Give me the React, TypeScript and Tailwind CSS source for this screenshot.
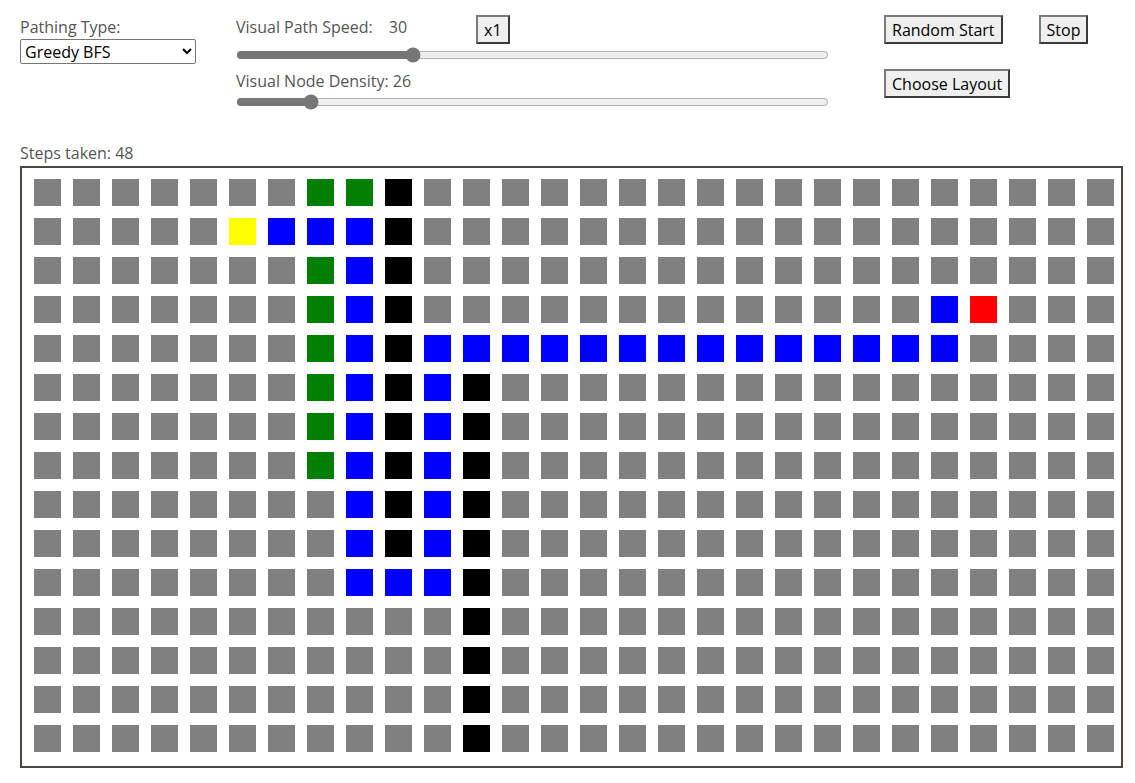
import React, { useState } from "react";

const ROWS = 15;
const COLS = 28;

function cellClass(r: number, c: number) {
  if (r === 1 && c === 5) return "bg-[#ffff00]";
  if (r === 3 && c === 24) return "bg-[#ff0000]";
  if ((c === 7 && [0, 2, 3, 4, 5, 6, 7].includes(r)) || (r === 0 && c === 8)) return "bg-[#008000]";
  if ((c === 9 && r <= 9) || (c === 11 && r >= 5)) return "bg-black";
  if (
    (r === 1 && c >= 6 && c <= 8) ||
    (c === 8 && r >= 2 && r <= 10) ||
    (r === 3 && c === 23) ||
    (r === 4 && c >= 10 && c <= 23) ||
    (c === 10 && r >= 5 && r <= 10) ||
    (r === 10 && c === 9)
  )
    return "bg-[#0000ff]";
  return "bg-[#808080]";
}

const btn =
  "h-[29px] px-[6px] shrink-0 bg-[#efefef] text-black leading-[22px] border-2 border-solid border-t-[#7b7b7b] border-l-[#7b7b7b] border-r-[#3a3a3a] border-b-[#3a3a3a] whitespace-nowrap";

export default function App() {
  const [algo, setAlgo] = useState("greedy");
  const [speed, setSpeed] = useState(30);
  const [density, setDensity] = useState(26);

  return (
    <div className="min-h-screen bg-white pt-[16px] px-[20px] font-['Open_Sans',sans-serif] text-[16px] text-[#555]">
      {/* Controls */}
      <div className="flex items-start h-[126px]">
        <div className="w-[216px] flex flex-col">
          <label className="leading-[22px]">Pathing Type:</label>
          <select
            value={algo}
            onChange={(e) => setAlgo(e.target.value)}
            className="mt-[1px] h-[25px] w-[176px] pl-0 border border-[#767676] rounded-[2px] bg-white text-black text-[16px]"
          >
            <option value="greedy">Greedy BFS</option>
            <option value="astar">A*</option>
            <option value="dijkstra">Dijkstra</option>
          </select>
        </div>

        <div className="w-[593px] flex flex-col">
          <div className="flex items-start h-[22px] leading-[22px]">
            <span>Visual Path Speed:</span>
            <span className="ml-[16px]">{speed}</span>
            <button className={`${btn} -mt-[1px] ml-[69px]`}>x1</button>
          </div>
          <input
            type="range"
            min={1}
            max={100}
            value={speed}
            onChange={(e) => setSpeed(Number(e.target.value))}
            className="block m-0 mt-[9px] w-full h-[16px] accent-[#767676]"
          />
          <div className="mt-[7px] leading-[22px]">Visual Node Density: {density}</div>
          <input
            type="range"
            min={15}
            max={110}
            value={density}
            onChange={(e) => setDensity(Number(e.target.value))}
            className="block m-0 mt-[2px] w-full h-[16px] accent-[#767676]"
          />
        </div>

        <div className="ml-[55px] flex flex-col -mt-[1px]">
          <div className="flex items-start">
            <button className={btn}>Random Start</button>
            <button className={`${btn} ml-[36px]`}>Stop</button>
          </div>
          <div className="mt-[25px]">
            <button className={btn}>Choose Layout</button>
          </div>
        </div>
      </div>

      <div className="leading-[22px]">Steps taken: 48</div>

      {/* Grid */}
      <div className="mt-[2px] w-[1103px] h-[602px] border-2 border-[#4b4641] pt-[11px] pl-[12px]">
        <div className="grid grid-cols-[repeat(28,27px)] auto-rows-[27px] gap-[12px]">
          {Array.from({ length: ROWS * COLS }).map((_, i) => {
            const r = Math.floor(i / COLS);
            const c = i % COLS;
            return <div key={i} className={cellClass(r, c)} />;
          })}
        </div>
      </div>
    </div>
  );
}
